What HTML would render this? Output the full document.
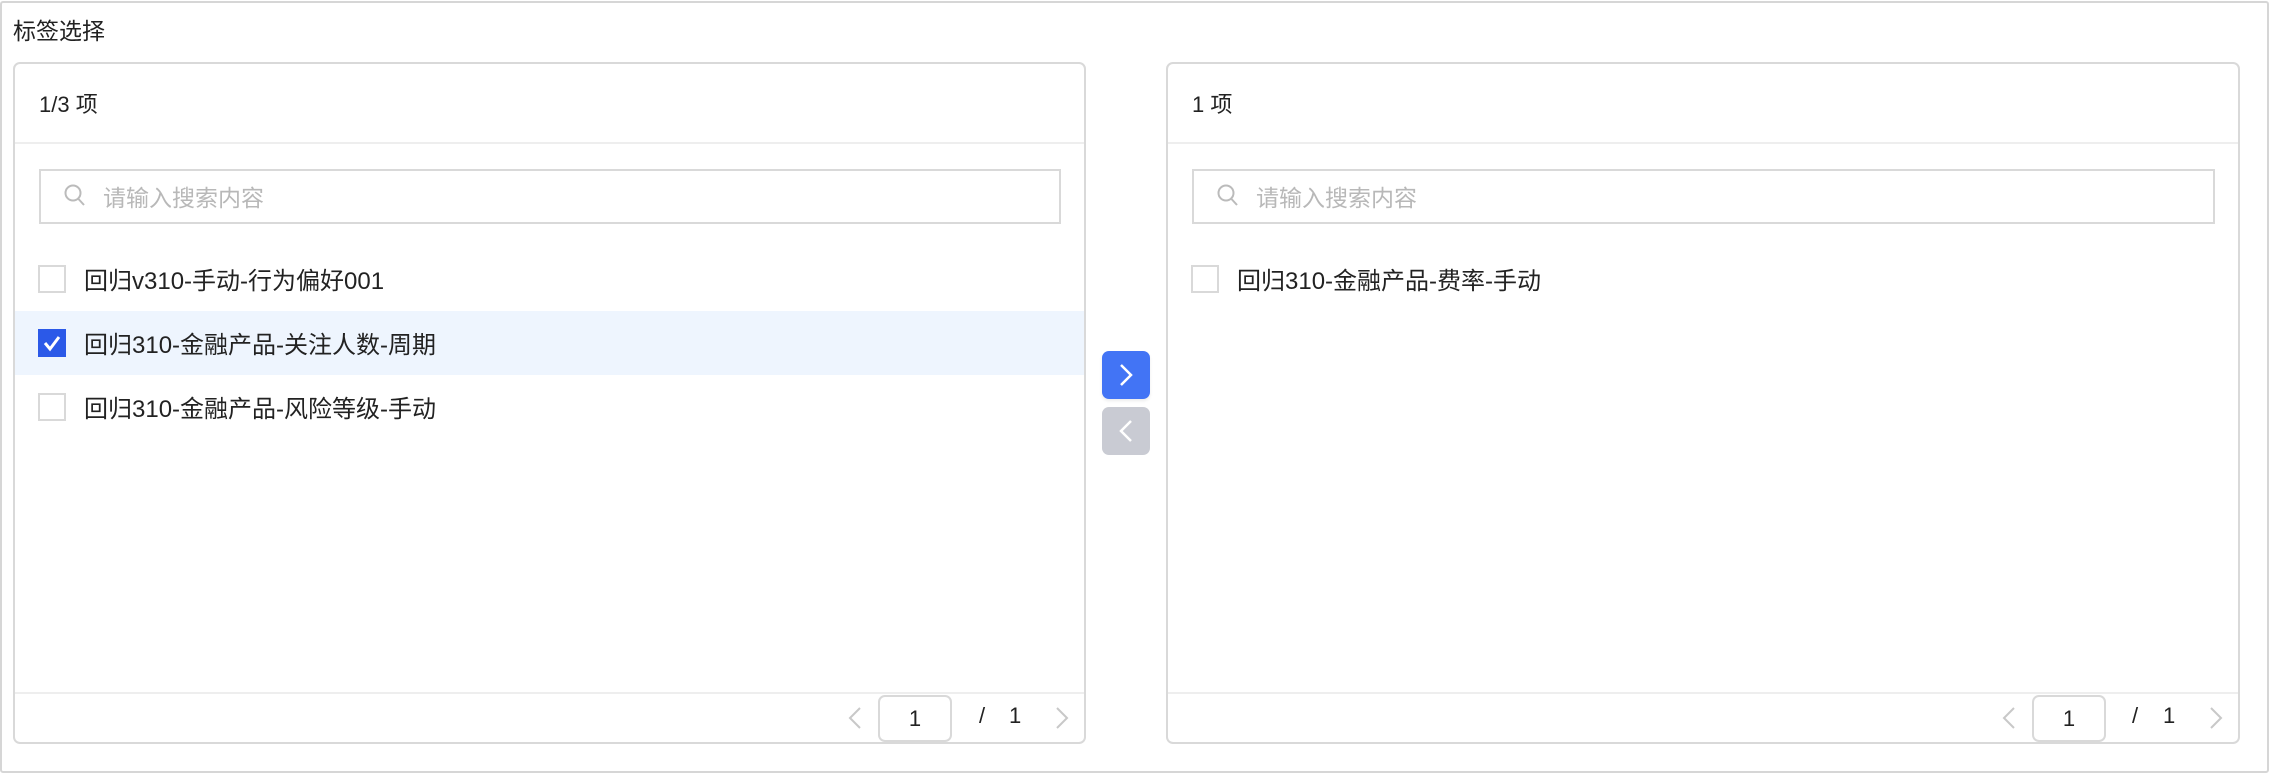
<!DOCTYPE html>
<html><head><meta charset="utf-8"><style>
*{box-sizing:border-box;margin:0;padding:0}
body{width:2270px;height:774px;background:#fff;font-family:"Liberation Sans","Noto Sans CJK SC",sans-serif;color:#222;position:relative;overflow:hidden}
.frame{position:absolute;left:0;top:1px;width:2269px;height:772px;border:2px solid #d6d6d6;border-radius:3px}
.title{position:absolute;left:13px;top:12px;font-size:23px;color:#222}
.panel{position:absolute;top:62px;height:682px;border:2px solid #d9d9d9;border-radius:7px;overflow:hidden}
.hdr{position:absolute;left:0;right:0;top:0;height:80px;border-bottom:2px solid #eeeeee}
.hdr span{position:absolute;left:24px;top:23px;font-size:22px}
.search{position:absolute;top:105px;height:55px;border:2px solid #d9d9d9}
.search .ph{position:absolute;left:62px;top:8px;font-size:23px;color:#b8b8b8}
.search svg{position:absolute;left:22px;top:12px}
.row{position:absolute;left:0;right:0;height:64px}
.row.sel{background:#eef5fe}
.cb{position:absolute;left:23px;top:18px;width:28px;height:28px;border:2px solid #d9d9d9;background:#fff}
.cb.on{background:#2b59e8;border-color:#2b59e8}
.row .t{position:absolute;left:69px;top:14px;font-size:24px;color:#222}
.ftr{position:absolute;left:0;right:0;bottom:0;height:50px;border-top:2px solid #eeeeee}
.pin{position:absolute;top:1px;width:74px;height:47px;border:2px solid #d9d9d9;border-radius:7px;font-size:22px;text-align:center;line-height:43px}
.pt{position:absolute;top:9px;font-size:22px}
.btn{position:absolute;left:1102px;width:48px;height:48px;border-radius:7px}
</style></head><body>
<div class="frame"></div>
<div class="title">标签选择</div>

<div class="panel" style="left:13px;width:1073px">
  <div class="hdr"><span>1/3 项</span></div>
  <div class="search" style="left:24px;width:1022px">
    <svg width="24" height="26" viewBox="0 0 24 26"><circle cx="10" cy="10" r="7.5" fill="none" stroke="#bbb" stroke-width="2"/><path d="M15.5 16 L21 22" stroke="#bbb" stroke-width="2"/></svg>
    <span class="ph">请输入搜索内容</span></div>
  <div class="row" style="top:183px"><div class="cb"></div><span class="t">回归v310-手动-行为偏好001</span></div>
  <div class="row sel" style="top:247px"><div class="cb on"><svg width="24" height="24" viewBox="0 0 24 24" style="position:absolute;left:0;top:0"><path d="M5 12 L10 18 L19 6" fill="none" stroke="#fff" stroke-width="3"/></svg></div><span class="t">回归310-金融产品-关注人数-周期</span></div>
  <div class="row" style="top:311px"><div class="cb"></div><span class="t">回归310-金融产品-风险等级-手动</span></div>
  <div class="ftr">
    <svg style="position:absolute;left:832px;top:12px" width="16" height="24" viewBox="0 0 16 24"><path d="M13 2 L3 12 L13 22" fill="none" stroke="#c8c8c8" stroke-width="2"/></svg>
    <div class="pin" style="left:863px">1</div>
    <span class="pt" style="left:964px">/</span><span class="pt" style="left:994px">1</span>
    <svg style="position:absolute;left:1039px;top:12px" width="16" height="24" viewBox="0 0 16 24"><path d="M3 2 L13 12 L3 22" fill="none" stroke="#c8c8c8" stroke-width="2"/></svg>
  </div>
</div>

<div class="btn" style="top:351px;background:#4274f5;box-shadow:0 2px 3px rgba(0,0,0,.08)"><svg width="48" height="48" viewBox="0 0 48 48"><path d="M19 14 L29 24 L19 34" fill="none" stroke="#fff" stroke-width="2.5"/></svg></div>
<div class="btn" style="top:407px;background:#c9cbd3"><svg width="48" height="48" viewBox="0 0 48 48"><path d="M29 14 L19 24 L29 34" fill="none" stroke="#fff" stroke-width="2.5"/></svg></div>

<div class="panel" style="left:1166px;width:1074px">
  <div class="hdr"><span>1 项</span></div>
  <div class="search" style="left:24px;width:1023px">
    <svg width="24" height="26" viewBox="0 0 24 26"><circle cx="10" cy="10" r="7.5" fill="none" stroke="#bbb" stroke-width="2"/><path d="M15.5 16 L21 22" stroke="#bbb" stroke-width="2"/></svg>
    <span class="ph">请输入搜索内容</span></div>
  <div class="row" style="top:183px"><div class="cb"></div><span class="t">回归310-金融产品-费率-手动</span></div>
  <div class="ftr">
    <svg style="position:absolute;left:833px;top:12px" width="16" height="24" viewBox="0 0 16 24"><path d="M13 2 L3 12 L13 22" fill="none" stroke="#c8c8c8" stroke-width="2"/></svg>
    <div class="pin" style="left:864px">1</div>
    <span class="pt" style="left:964px">/</span><span class="pt" style="left:995px">1</span>
    <svg style="position:absolute;left:1040px;top:12px" width="16" height="24" viewBox="0 0 16 24"><path d="M3 2 L13 12 L3 22" fill="none" stroke="#c8c8c8" stroke-width="2"/></svg>
  </div>
</div>
</body></html>
